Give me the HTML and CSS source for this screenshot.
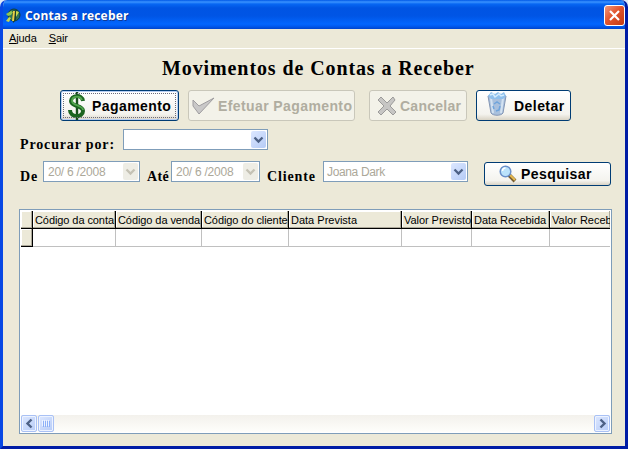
FILE: index.html
```html
<!DOCTYPE html>
<html lang="pt">
<head>
<meta charset="utf-8">
<title>Contas a receber</title>
<link rel="stylesheet" href="styles.css">
</head>
<body>
<div class="window">
  <header class="titlebar">
    <svg class="app-icon" width="16" height="16" viewBox="0 0 16 16"><circle cx="9" cy="7" r="6" fill="#2d735a" stroke="#123c38"/><path d="M7 3l5-1-1 10-3 3z" fill="#173e2c"/><path d="M1 6l5-3 2 1-2 3-3 1z" fill="#8fc850"/><path d="M8 3h2l-1 10H7z" fill="#e6cf48"/><path d="M1 13l3-4 2 1-2 4zM11 3l3 1-3 5z" fill="#c8d84a"/></svg>
    <span class="caption">Contas a receber</span>
    <button class="close" aria-label="Fechar"><svg width="17" height="17" viewBox="0 0 17 17"><path d="M4 4l9 9M13 4l-9 9" stroke="#fff" stroke-width="2.2"/></svg></button>
  </header>
  <nav class="menu"><span><u>A</u>juda</span><span><u>S</u>air</span></nav>
  <main>
    <h1>Movimentos de Contas a Receber</h1>
    <div class="actions">
      <button class="btn pay">
        <svg width="20" height="30" viewBox="0 0 20 30"><path d="M10 1v28" stroke="#174e1b" stroke-width="2.4"/><path d="M16 10c-1-7-12-6-12 0 0 6 12 4 12 10 0 7-13 7-13-1" fill="none" stroke="#1b6420" stroke-width="4"/><path d="M15 9c-2-5-10-4-10 1 0 5 11 4 11 9" fill="none" stroke="#52a54d" stroke-width="1.8"/></svg>
        <span>Pagamento</span>
      </button>
      <button class="btn disabled confirm">
        <svg width="24" height="20" viewBox="0 0 24 20"><path d="M2 4l6 6L23 2 8 18 2 10z" fill="#c9c8c8" stroke="#9f9da0"/></svg>
        <span>Efetuar Pagamento</span>
      </button>
      <button class="btn disabled cancel">
        <svg width="20" height="20" viewBox="0 0 20 20"><path d="M1 4l3-3 6 6 6-6 2 3-5 6 6 6-3 3-6-6-6 6-3-3 6-6z" fill="#c7c6c4" stroke="#9c9b9a"/></svg>
        <span>Cancelar</span>
      </button>
      <button class="btn delete">
        <svg width="22" height="26" viewBox="0 0 22 26"><path d="M2 5l3 17c2 3 10 3 12 0l3-17z" fill="#a9c0dd" stroke="#8496b4"/><path d="M5 7l2 15M17 7l-2 15" stroke="#d4e2f1" stroke-width="2"/><path d="M2 5l3-4 4 2 3-2 3 2 3-2 2 4-3 3H5z" fill="#8fc0ec"/><path d="M4 4l3-1 2 3 4-3 2 2 3-1" fill="none" stroke="#d5edfd" stroke-width="1.5"/><path d="M8 13l3-2 3 2M14 15l-1 4-3 1M8 18l-1-3" fill="none" stroke="#6fa4dc" stroke-width="1.5"/></svg>
        <span>Deletar</span>
      </button>
    </div>
    <div class="search-by">
      <label class="l-by">Procurar por:</label>
      <div class="combo"><i class="drop"><svg width="15" height="17" viewBox="0 0 15 17"><path d="M3.5 6.5l4 4 4-4" fill="none" stroke="#4d6185" stroke-width="2.3"/></svg></i></div>
    </div>
    <div class="filters">
      <label class="l-de">De</label>
      <div class="combo date from"><span>20/ 6 /2008</span><i class="drop off"><svg width="15" height="17" viewBox="0 0 15 17"><path d="M3.5 6.5l4 4 4-4" fill="none" stroke="#c5c2b5" stroke-width="2.3"/></svg></i></div>
      <label class="l-ate">Até</label>
      <div class="combo date to"><span>20/ 6 /2008</span><i class="drop off"><svg width="15" height="17" viewBox="0 0 15 17"><path d="M3.5 6.5l4 4 4-4" fill="none" stroke="#c5c2b5" stroke-width="2.3"/></svg></i></div>
      <label class="l-cli">Cliente</label>
      <div class="combo client"><span>Joana Dark</span><i class="drop"><svg width="15" height="17" viewBox="0 0 15 17"><path d="M3.5 6.5l4 4 4-4" fill="none" stroke="#4d6185" stroke-width="2.3"/></svg></i></div>
      <button class="btn find">
        <svg width="18" height="18" viewBox="0 0 18 18"><path d="M10 10l6 6" stroke="#775e32" stroke-width="4"/><path d="M11 10l5 5" stroke="#e7b94e" stroke-width="2"/><circle cx="6.5" cy="6.5" r="5.3" fill="#bae2fb" stroke="#698fc9" stroke-width="1.5"/><path d="M3.5 6a3 3 0 0 1 3-3" fill="none" stroke="#fff" stroke-width="1.5"/></svg>
        <span>Pesquisar</span>
      </button>
    </div>
    <section class="grid">
      <div class="cells">
        <b class="head"></b><b class="head c1"><span>Código da conta</span></b><b class="head c2"><span>Código da venda</span></b><b class="head c3"><span>Código do cliente</span></b><b class="head c4"><span>Data Prevista</span></b><b class="head c5"><span>Valor Previsto</span></b><b class="head c6"><span>Data Recebida</span></b><b class="head c7"><span>Valor Receb</span></b>
        <b class="head marker"></b><i></i><i></i><i></i><i></i><i></i><i></i><i class="last"></i>
      </div>
      <div class="scroll">
        <i class="sb"><svg width="15" height="15" viewBox="0 0 15 15"><path d="M9.5 3.5l-4 4 4 4" fill="none" stroke="#4d6185" stroke-width="2.4"/></svg></i>
        <i class="sb thumb"><svg width="15" height="15" viewBox="0 0 15 15"><path d="M3.5 4v6M5.5 4v6M7.5 4v6M9.5 4v6" stroke="#eef4ff"/><path d="M4.5 5v6M6.5 5v6M8.5 5v6M10.5 5v6" stroke="#8cb0f8"/></svg></i>
        <i class="sb end"><svg width="15" height="15" viewBox="0 0 15 15"><path d="M5.5 3.5l4 4-4 4" fill="none" stroke="#4d6185" stroke-width="2.4"/></svg></i>
      </div>
    </section>
  </main>
</div>
</body>
</html>
```

FILE: styles.css
```css
* { box-sizing: border-box; }
body { margin: 0; width: 628px; height: 449px; overflow: hidden; background: #dfe9f8; font: 11px "Liberation Sans", sans-serif; color: #000; }
button { font: inherit; padding: 0; margin: 0; }
svg { display: block; flex: none; }
.window { width: 628px; height: 449px; border: solid #0831d9; border-width: 0 3px 3px; border-color: #0831d9 #001ca5 #001ca5 #0848e4; border-radius: 7px 7px 0 0; background: #ece9d8; overflow: hidden; }
.titlebar { height: 29px; margin: 0 -3px; padding: 2px 3px 0 5px; display: flex; align-items: center; background: linear-gradient(#0058e6 0, #3a93ff 2px, #0767f3 4px, #0054e3 8px, #0055e5 16px, #0266fe 24px, #005bf2 26px, #0045cc 29px); }
.caption { margin-left: 4px; width: 106px; color: #fff; font: bold 12px/18px "Open Sans", sans-serif; letter-spacing: 0.17px; text-shadow: 1px 1px #0f3a96; white-space: nowrap; }
.close { margin-left: auto; width: 21px; height: 21px; border: 1px solid #fff; border-radius: 3px; background: linear-gradient(135deg, #ee987c, #e2552e 45%, #c23a12); display: grid; place-items: center; }
.menu { height: 20px; border-bottom: 1px solid #fff; padding: 2px 6px 0; display: flex; gap: 12px; line-height: 15px; letter-spacing: -0.1px; }
main { padding: 0 13px 0 16px; }
h1 { margin: 5px 0 0 143px; width: 320px; height: 28px; font: bold 20px/28px "Liberation Serif", serif; letter-spacing: 0.9px; white-space: nowrap; }
.actions { margin: 8px 0 0 41px; display: flex; height: 31px; }
.btn { display: flex; align-items: center; border: 1px solid #003c74; border-radius: 3px; background: linear-gradient(#fff, #f4f3ee 80%, #d9d3c5); font: bold 14px/20px "Liberation Sans", sans-serif; color: #000; white-space: nowrap; }
.pay { width: 119px; padding-left: 6px; gap: 5px; box-shadow: inset 0 0 0 1px #b7cef3; outline: 1px dotted #6c6c7c; outline-offset: -4px; }
.pay span { letter-spacing: 0.42px; }
.confirm { width: 167px; margin-left: 9px; padding-left: 2px; gap: 3px; }
.confirm span { letter-spacing: 0.4px; }
.cancel { width: 98px; margin-left: 14px; padding-left: 7px; gap: 3px; }
.cancel span { letter-spacing: 0.25px; }
.delete { width: 95px; margin-left: 9px; padding-left: 9px; gap: 6px; }
.delete span { letter-spacing: 0.45px; }
.delete svg { margin-top: -4px; }
.disabled { color: #b0ada0; border-color: #c9c7ba; background: #f3f2e9; }
.search-by { display: flex; height: 21px; margin-top: 8px; }
label { font: bold 14px/20px "Liberation Serif", serif; white-space: nowrap; padding-top: 6px; letter-spacing: 0.85px; }
.l-by { width: 104px; padding-left: 1px; }
.combo { width: 145px; height: 21px; border: 1px solid #7f9db9; background: #fff; display: flex; justify-content: space-between; align-items: center; padding: 1px 1px 1px 4px; color: #aca899; font-size: 12px; letter-spacing: -0.25px; }
.combo span { line-height: 18px; white-space: nowrap; }
.drop { width: 15px; height: 17px; margin-left: auto; background: linear-gradient(135deg, #dce7ff, #b5cbf6); border-radius: 2px; }
.drop.off { background: #eeede5; }
.filters { display: flex; height: 24px; margin-top: 11px; }
.l-de { width: 24px; padding-left: 1px; }
.from { width: 97px; }
.to { width: 89px; }
.l-ate { width: 31px; padding-left: 7px; letter-spacing: 0.4px; }
.l-cli { width: 63px; padding-left: 7px; }
.client { padding-left: 3px; letter-spacing: -0.35px; }
.find { width: 127px; height: 24px; margin: 1px 0 0 16px; padding-left: 14px; gap: 4px; }
.find span { letter-spacing: 0.45px; }
.grid { margin-top: 24px; width: 593px; height: 225px; border: 1px solid #7f9db9; background: #fff; padding: 1px; display: flex; flex-direction: column; }
.cells { display: grid; grid-template-columns: 12px 83px 86px 87px 113px 70px 78px 60px; grid-template-rows: 18px 18px; width: 589px; }
.head { background: #ece9d8; border: 1px solid #000; border-width: 0 1px 1px 0; box-shadow: inset -1px -1px #aca899, inset 1px 1px #fff; font-weight: normal; line-height: 18px; padding-left: 2px; overflow: hidden; white-space: nowrap; }
.c1, .c2, .c3 { letter-spacing: -0.08px; }
.c5, .c6 { letter-spacing: -0.05px; }
.c7 { border-right: 0; }
.cells i { border: 1px solid #c0c0c0; border-width: 0 1px 1px 0; }
.cells .last { border-right: 0; }
.scroll { height: 17px; margin-top: auto; background: linear-gradient(#f3f1ec, #fefefb); display: flex; gap: 1px; }
.sb { width: 16px; height: 17px; border: 1px solid #a9c1f5; border-radius: 2px; background: linear-gradient(135deg, #dce7ff, #b7ccf7); box-shadow: inset 0 0 0 1px #edf3ff; }
.end { margin-left: auto; }
```
